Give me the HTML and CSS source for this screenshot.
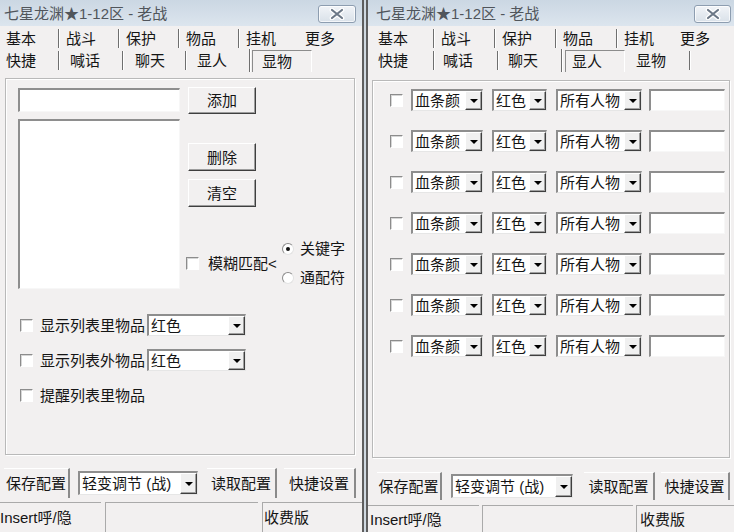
FILE: index.html
```html
<!DOCTYPE html>
<html lang="zh-CN">
<head>
    <meta charset="UTF-8">
    <title>七星龙渊★1-12区 - 老战</title>
    <link rel="stylesheet" href="styles.css">
</head>
<body>
<div class="desk">
    <!-- 左窗口：显物 -->
    <div class="win win-l">
        <div class="titlebar">
            <span class="title">七星龙渊★1-12区 - 老战</span>
            <span class="close">
                <svg width="16" height="12" viewBox="0 0 16 12"><path d="M3 2L13 10M13 2L3 10" stroke="#fff" stroke-width="4.6" stroke-linecap="round"/><path d="M3 2L13 10M13 2L3 10" stroke="#6c7887" stroke-width="2.2" stroke-linecap="round"/></svg>
            </span>
        </div>
        <div class="tabs">
            <div class="tabrow r1">
                <span class="tab first">基本</span>
                <span class="tab sep">战斗</span>
                <span class="tab sep">保护</span>
                <span class="tab sep">物品</span>
                <span class="tab sep">挂机</span>
                <span class="tab more">更多</span>
            </div>
            <div class="tabrow r2">
                <span class="tab first">快捷</span>
                <span class="tab sep t2">喊话</span>
                <span class="tab sep t3">聊天</span>
                <span class="tab sep t4">显人</span>
                <span class="tab sep sel"><span class="frame">显物</span></span>
            </div>
        </div>
        <div class="panel">
            <div class="pick">
                <div class="pick-list">
                    <span class="edit name"></span>
                    <span class="edit listbox"></span>
                </div>
                <div class="pick-btns">
                    <button class="btn add">添加</button>
                    <button class="btn del">删除</button>
                    <button class="btn clr">清空</button>
                    <div class="fuzzy">
                        <span class="check"></span>
                        <span class="fuzzy-label">模糊匹配&lt;</span>
                        <div class="radios">
                            <div class="radio-row"><span class="radio on"></span>关键字</div>
                            <div class="radio-row"><span class="radio"></span>通配符</div>
                        </div>
                    </div>
                </div>
            </div>
            <div class="opts">
                <div class="opt">
                    <span class="check"></span><span class="opt-label">显示列表里物品</span>
                    <div class="combo item-color"><span class="val">红色</span><span class="drop"></span></div>
                </div>
                <div class="opt">
                    <span class="check"></span><span class="opt-label">显示列表外物品</span>
                    <div class="combo item-color"><span class="val">红色</span><span class="drop"></span></div>
                </div>
                <div class="opt">
                    <span class="check"></span><span class="opt-label">提醒列表里物品</span>
                </div>
            </div>
        </div>
        <div class="actions">
            <button class="flat save">保存配置</button>
            <div class="combo cfg"><span class="val">轻变调节 (战)</span><span class="drop"></span></div>
            <button class="flat load">读取配置</button>
            <button class="flat hotkey">快捷设置</button>
        </div>
        <div class="status">
            <span class="cell c1">Insert呼/隐</span>
            <span class="cell c2"></span>
            <span class="cell c3">收费版</span>
        </div>
    </div>

    <!-- 右窗口：显人 -->
    <div class="win win-r">
        <div class="titlebar">
            <span class="title">七星龙渊★1-12区 - 老战</span>
            <span class="close">
                <svg width="16" height="12" viewBox="0 0 16 12"><path d="M3 2L13 10M13 2L3 10" stroke="#fff" stroke-width="4.6" stroke-linecap="round"/><path d="M3 2L13 10M13 2L3 10" stroke="#6c7887" stroke-width="2.2" stroke-linecap="round"/></svg>
            </span>
        </div>
        <div class="tabs">
            <div class="tabrow r1">
                <span class="tab first">基本</span>
                <span class="tab sep">战斗</span>
                <span class="tab sep">保护</span>
                <span class="tab sep">物品</span>
                <span class="tab sep">挂机</span>
                <span class="tab more">更多</span>
            </div>
            <div class="tabrow r2">
                <span class="tab first">快捷</span>
                <span class="tab sep t2">喊话</span>
                <span class="tab sep t3">聊天</span>
                <span class="tab sep sel"><span class="frame">显人</span></span>
                <span class="tab t5">显物</span>
                <span class="tab sep tail"></span>
            </div>
        </div>
        <div class="panel">
            <div class="prow"><span class="check"></span><div class="combo c-bar"><span class="val">血条颜</span><span class="drop"></span></div><div class="combo c-color"><span class="val">红色</span><span class="drop"></span></div><div class="combo c-target"><span class="val">所有人物</span><span class="drop"></span></div><span class="edit c-name"></span></div>
            <div class="prow"><span class="check"></span><div class="combo c-bar"><span class="val">血条颜</span><span class="drop"></span></div><div class="combo c-color"><span class="val">红色</span><span class="drop"></span></div><div class="combo c-target"><span class="val">所有人物</span><span class="drop"></span></div><span class="edit c-name"></span></div>
            <div class="prow"><span class="check"></span><div class="combo c-bar"><span class="val">血条颜</span><span class="drop"></span></div><div class="combo c-color"><span class="val">红色</span><span class="drop"></span></div><div class="combo c-target"><span class="val">所有人物</span><span class="drop"></span></div><span class="edit c-name"></span></div>
            <div class="prow"><span class="check"></span><div class="combo c-bar"><span class="val">血条颜</span><span class="drop"></span></div><div class="combo c-color"><span class="val">红色</span><span class="drop"></span></div><div class="combo c-target"><span class="val">所有人物</span><span class="drop"></span></div><span class="edit c-name"></span></div>
            <div class="prow"><span class="check"></span><div class="combo c-bar"><span class="val">血条颜</span><span class="drop"></span></div><div class="combo c-color"><span class="val">红色</span><span class="drop"></span></div><div class="combo c-target"><span class="val">所有人物</span><span class="drop"></span></div><span class="edit c-name"></span></div>
            <div class="prow"><span class="check"></span><div class="combo c-bar"><span class="val">血条颜</span><span class="drop"></span></div><div class="combo c-color"><span class="val">红色</span><span class="drop"></span></div><div class="combo c-target"><span class="val">所有人物</span><span class="drop"></span></div><span class="edit c-name"></span></div>
            <div class="prow"><span class="check"></span><div class="combo c-bar"><span class="val">血条颜</span><span class="drop"></span></div><div class="combo c-color"><span class="val">红色</span><span class="drop"></span></div><div class="combo c-target"><span class="val">所有人物</span><span class="drop"></span></div><span class="edit c-name"></span></div>
        </div>
        <div class="actions">
            <button class="flat save">保存配置</button>
            <div class="combo cfg"><span class="val">轻变调节 (战)</span><span class="drop"></span></div>
            <button class="flat load">读取配置</button>
            <button class="flat hotkey">快捷设置</button>
        </div>
        <div class="status">
            <span class="cell c1">Insert呼/隐</span>
            <span class="cell c2"></span>
            <span class="cell c3">收费版</span>
        </div>
    </div>
</div>
</body>
</html>
```

FILE: styles.css
```css
/* 基本样式 */
html, body {
    margin: 0;
    padding: 0;
    height: 100%;
    overflow: hidden;
    background: #cfd8e0;
    font: 15px/1 "Liberation Sans", "Noto Sans CJK SC", sans-serif;
    color: #151515;
}

.desk {
    display: flex;
    justify-content: space-between;
    width: 734px;
    height: 532px;
}

/* 窗口 */
.win {
    box-sizing: border-box;
    height: 532px;
    background: #f2f0f0;
    display: flex;
    flex-direction: column;
    overflow: hidden;
}

.win-l {
    width: 364px;
    border-right: 2px solid #5e5e5e;
}

.win-r {
    width: 368px;
    border-left: 2px solid #5e5e5e;
}

/* 标题栏 */
.titlebar {
    height: 26px;
    flex: none;
    display: flex;
    align-items: center;
    justify-content: space-between;
    background: linear-gradient(to bottom, #cbd7e3, #dce5ee);
}

.title {
    color: #50555b;
    white-space: nowrap;
}

.win-l .title { padding-left: 4px; }
.win-r .title { padding-left: 8px; }

.close {
    box-sizing: border-box;
    height: 18px;
    margin-top: 1px;
    display: flex;
    align-items: center;
    justify-content: center;
    border: 1px solid #8d9db0;
    border-radius: 3px;
    background: linear-gradient(to bottom, #f1f4f8, #d9e1e9);
    box-shadow: inset 0 0 0 1px rgba(255,255,255,0.7);
}

.win-l .close { width: 38px; margin-right: 6px; }
.win-r .close { width: 37px; margin-right: 3px; }

/* 标签页 */
.tabrow {
    display: flex;
    align-items: center;
}

.r1 {
    height: 21px;
    margin-top: 2px;
}

.r2 {
    height: 23px;
}

.tab {
    box-sizing: border-box;
    flex: none;
    height: 19px;
    line-height: 19px;
    white-space: nowrap;
}

.tab.sep {
    border-left: 1px solid #6f6f6f;
    box-shadow: inset 1px 0 #fff;
}

.tab.sel {
    height: 23px;
    display: flex;
    align-items: flex-end;
}

.frame {
    box-sizing: border-box;
    width: 60px;
    height: 22px;
    line-height: 21px;
    border-top: 1px solid #8c8c8c;
    border-left: 1px solid #8c8c8c;
    border-right: 1px solid #fff;
}

/* 左窗口标签尺寸 */
.win-l .r1 .tab { width: 60px; padding-left: 7px; }
.win-l .r1 .first { width: 58px; padding-left: 6px; }
.win-l .r2 .first { width: 58px; padding-left: 6px; }
.win-l .r2 .t2 { width: 64px; padding-left: 11px; }
.win-l .r2 .t3 { width: 63px; padding-left: 12px; }
.win-l .r2 .t4 { width: 64px; padding-left: 11px; }
.win-l .r2 .sel { width: 63px; }
.win-l .frame { margin-left: 2px; padding-left: 9px; }

/* 右窗口标签尺寸 */
.win-r .r1 .tab { width: 61px; padding-left: 7px; }
.win-r .r1 .first { width: 65px; padding-left: 10px; }
.win-r .r1 .more { padding-left: 3px; }
.win-r .r2 .first { width: 65px; padding-left: 10px; }
.win-r .r2 .t2 { width: 64px; padding-left: 9px; }
.win-r .r2 .t3 { width: 64px; padding-left: 10px; }
.win-r .r2 .sel { width: 64px; }
.win-r .r2 .t5 { width: 64px; padding-left: 11px; }
.win-r .r2 .tail { width: 2px; }
.win-r .frame { margin-left: 3px; padding-left: 6px; }

/* 分组框 */
.panel {
    box-sizing: border-box;
    flex: none;
    border: 1px solid #b9b9b9;
    box-shadow: inset 1px 1px #fff, 1px 1px #fff;
}

.win-l .panel {
    margin: 6px 7px 0 5px;
    height: 377px;
    padding: 9px 0 0 12px;
}

.win-r .panel {
    margin: 8px 4px 0 4px;
    height: 378px;
    padding: 8px 0 0 17px;
}

/* 通用控件 */
.check {
    box-sizing: border-box;
    flex: none;
    width: 13px;
    height: 13px;
    background: #fff;
    border-top: 1px solid #8c8c8c;
    border-left: 1px solid #8c8c8c;
    border-right: 1px solid #fff;
    border-bottom: 1px solid #fff;
    box-shadow: inset 1px 1px #d6d6d6;
}

.edit {
    display: block;
    box-sizing: border-box;
    background: #fff;
    border-top: 2px solid #8e8e8e;
    border-left: 2px solid #8e8e8e;
    border-right: 1px solid #f7f7f7;
    border-bottom: 1px solid #f7f7f7;
}

.btn {
    box-sizing: border-box;
    width: 68px;
    padding: 0;
    font: inherit;
    color: #151515;
    background: #f2f0f0;
    border: 1px solid;
    border-color: #fff #3f3f3f #3f3f3f #fff;
    box-shadow: inset -1px -1px #9d9d9d;
}

.combo {
    box-sizing: border-box;
    flex: none;
    display: flex;
    height: 22px;
    background: #fff;
    border-top: 2px solid #8e8e8e;
    border-left: 2px solid #8e8e8e;
    border-right: 1px solid #e6e6e6;
    border-bottom: 1px solid #e6e6e6;
}

.combo .val {
    flex: 1;
    padding-left: 2px;
    line-height: 19px;
    white-space: nowrap;
    overflow: hidden;
}

.combo .drop {
    box-sizing: border-box;
    flex: none;
    width: 17px;
    display: flex;
    align-items: center;
    justify-content: center;
    background: #f0f0f0;
    border: 1px solid;
    border-color: #fff #3f3f3f #3f3f3f #fff;
    box-shadow: inset -1px -1px #a0a0a0;
}

.combo .drop::after {
    content: "";
    border-left: 4px solid transparent;
    border-right: 4px solid transparent;
    border-top: 4px solid #000;
}

/* 左窗口：物品列表 */
.pick {
    display: flex;
}

.pick-list {
    width: 162px;
    display: flex;
    flex-direction: column;
    gap: 7px;
}

.name { height: 24px; }
.listbox { height: 170px; }

.pick-btns {
    margin: -1px 0 0 8px;
    display: flex;
    flex-direction: column;
    align-items: flex-start;
}

.add { height: 27px; }
.del { height: 28px; margin-top: 29px; }
.clr { height: 28px; margin-top: 8px; }

.fuzzy {
    margin: 27px 0 0 -2px;
    height: 58px;
    display: flex;
    align-items: center;
}

.fuzzy-label {
    margin-left: 9px;
    width: 74px;
    white-space: nowrap;
}

.radios {
    display: flex;
    flex-direction: column;
}

.radio-row {
    height: 29px;
    display: flex;
    align-items: center;
    gap: 6px;
    white-space: nowrap;
}

.radio {
    position: relative;
    box-sizing: border-box;
    width: 12px;
    height: 12px;
    border-radius: 50%;
    background: #fff;
    border: 1px solid #8c8c8c;
    border-right-color: #e2e2e2;
    border-bottom-color: #e2e2e2;
}

.radio.on::after {
    content: "";
    position: absolute;
    left: 3px;
    top: 3px;
    width: 4px;
    height: 4px;
    border-radius: 50%;
    background: #111;
}

.opts {
    margin-top: 22px;
}

.opt {
    height: 22px;
    margin-bottom: 13px;
    padding-left: 2px;
    display: flex;
    align-items: center;
}

.opt-label {
    margin: 0 2px 0 7px;
    width: 105px;
    white-space: nowrap;
}

.item-color { width: 99px; }

/* 右窗口：人物行 */
.prow {
    height: 22px;
    margin-bottom: 19px;
    display: flex;
    align-items: center;
}

.c-bar { width: 72px; margin-left: 8px; }
.c-color { width: 55px; margin-left: 9px; }
.c-target { width: 86px; margin-left: 9px; }
.c-name { width: 76px; height: 22px; margin-left: 7px; }

/* 底部按钮 */
.actions {
    flex: none;
    display: flex;
    align-items: center;
}

.win-l .actions { height: 30px; margin-top: 13px; }
.win-r .actions { height: 28px; margin-top: 14px; }

.flat {
    box-sizing: border-box;
    height: 100%;
    padding: 0;
    font: inherit;
    color: #151515;
    background: #f2f0f0;
    border: none;
    border-top: 1px solid #fff;
    border-right: 2px solid #8a8a8a;
    white-space: nowrap;
}

.actions .cfg { height: 24px; }
.actions .cfg .val { line-height: 21px; }

.win-l .save { width: 66px; margin-left: 4px; }
.win-l .cfg { width: 120px; margin-left: 8px; }
.win-l .load { width: 70px; margin-left: 9px; }
.win-l .hotkey { width: 72px; margin-left: 7px; }

.win-r .save { width: 65px; margin-left: 9px; }
.win-r .cfg { width: 122px; margin-left: 9px; }
.win-r .load { width: 71px; margin-left: 11px; }
.win-r .hotkey { width: 69px; margin-left: 6px; }

/* 状态栏 */
.status {
    flex: 1;
    display: flex;
}

.win-l .status { margin-top: 4px; }
.win-r .status { margin-top: 5px; }

.cell {
    box-sizing: border-box;
    display: flex;
    align-items: center;
    border-top: 1px solid #aaa;
    border-left: 1px solid #aaa;
    white-space: nowrap;
}

.win-l .c1 { width: 102px; margin-left: -1px; }
.win-l .c2 { width: 153px; margin-left: 4px; }
.win-l .c3 { flex: 1; margin-left: 4px; padding-left: 1px; }

.win-r .c1 { width: 111px; padding-left: 2px; border-left: none; }
.win-r .c2 { width: 151px; margin-left: 3px; }
.win-r .c3 { flex: 1; margin-left: 3px; padding-left: 3px; }
```
